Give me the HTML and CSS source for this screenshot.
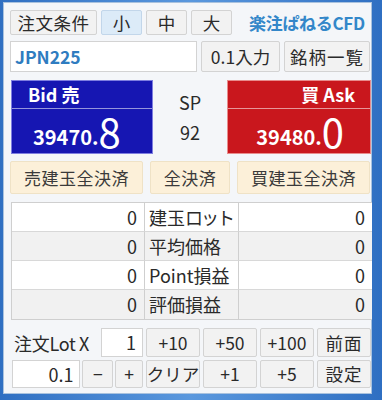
FILE: index.html
```html
<!DOCTYPE html>
<html lang="ja">
<head>
<meta charset="utf-8">
<link rel="stylesheet" href="styles.css">
</head>
<body>
<div class="win">
  <div class="row r1">
    <button class="btn cond">注文条件</button>
    <button class="btn sz sel">小</button>
    <button class="btn sz">中</button>
    <button class="btn sz">大</button>
    <div class="logo">楽注ぱねるCFD</div>
  </div>
  <div class="row r2">
    <div class="sym">JPN225</div>
    <button class="btn in">0.1入力</button>
    <button class="btn list">銘柄一覧</button>
  </div>
  <div class="quote">
    <div class="px bid">
      <div class="px-head">Bid 売</div>
      <div class="px-num"><span class="px-int">39470.</span><span class="px-dec">8</span></div>
    </div>
    <div class="sp"><div>SP</div><div>92</div></div>
    <div class="px ask">
      <div class="px-head">買 Ask</div>
      <div class="px-num"><span class="px-int">39480.</span><span class="px-dec">0</span></div>
    </div>
  </div>
  <div class="close">
    <button class="cbtn">売建玉全決済</button>
    <button class="cbtn">全決済</button>
    <button class="cbtn">買建玉全決済</button>
  </div>
  <div class="tbl">
    <div class="cell v">0</div><div class="cell l">建玉<span class="kana">ロット</span></div><div class="cell v">0</div>
    <div class="cell v alt">0</div><div class="cell l alt">平均価格</div><div class="cell v alt">0</div>
    <div class="cell v">0</div><div class="cell l">Point損益</div><div class="cell v">0</div>
    <div class="cell v alt">0</div><div class="cell l alt">評価損益</div><div class="cell v alt">0</div>
  </div>
  <div class="ord o1">
    <div class="left">
      <span class="lbl">注文Lot X</span>
      <div class="inp lot">1</div>
    </div>
    <button class="btn ob">+10</button>
    <button class="btn ob">+50</button>
    <button class="btn ob">+100</button>
    <button class="btn ob last">前面</button>
  </div>
  <div class="ord o2">
    <div class="left">
      <div class="inp step">0.1</div>
      <button class="btn pm minus">−</button>
      <button class="btn pm plus">+</button>
    </div>
    <button class="btn ob">クリア</button>
    <button class="btn ob">+1</button>
    <button class="btn ob">+5</button>
    <button class="btn ob last">設定</button>
  </div>
</div>
</body>
</html>
```

FILE: styles.css
```css
* { box-sizing: border-box; }
html, body { margin: 0; padding: 0; }
body {
  width: 382px;
  height: 400px;
  background: linear-gradient(90deg, #2f6fc2 0, #5a98de 50%, #2f6fc2 100%);
  font-family: "Noto Sans CJK JP", "Noto Sans", sans-serif;
  color: #2a2a2a;
  overflow: hidden;
}
.win {
  margin: 2px 10px 0 3px;
  height: 392px;
  background: #f4f6f9;
  border: 1px solid #a9c2de;
  padding: 7px 0 0 6px;
}
button {
  font-family: inherit;
  margin: 0;
  padding: 0;
  cursor: default;
}
.btn {
  background: #f2f2f2;
  border: 1px solid #d3d3d3;
  border-radius: 2px;
  color: #2a2a2a;
  font-size: 17.5px;
  line-height: 1;
  display: flex;
  align-items: center;
  justify-content: center;
  white-space: nowrap;
}
.row { display: flex; }
.r1 { height: 25px; gap: 4px; }
.cond { width: 87px; letter-spacing: 0.5px; }
.sz { width: 41px; }
.sel { background: #dcebf8; border-color: #c2d6ea; }
.logo {
  margin-left: 13px;
  color: #3387c9;
  font-weight: bold;
  font-size: 17px;
  line-height: 25px;
  letter-spacing: -0.3px;
}
.r2 { height: 31px; gap: 4px; margin-top: 6px; }
.sym {
  width: 187px;
  background: #fff;
  border: 1px solid #d3d3d3;
  color: #2f7cc0;
  font-weight: bold;
  font-size: 17.5px;
  line-height: 29px;
  padding-left: 4px;
}
.in { width: 79px; }
.list { width: 86px; letter-spacing: 1px; }

.quote {
  display: grid;
  grid-template-columns: 142px 1fr 144px;
  height: 74px;
  margin-top: 8px;
  padding-left: 1px;
}
.px {
  color: #fff;
  border: 1px solid #7e7ee0;
  display: flex;
  flex-direction: column;
}
.bid { background: #1616b2; }
.ask { background: #c9171d; border-color: #e88c8c; }
.px-head {
  height: 28px;
  font-weight: bold;
  font-size: 18px;
  line-height: 26px;
  padding: 0 16px;
  border-bottom: 1px solid rgba(255,255,255,0.55);
}
.ask .px-head { text-align: right; padding: 0 15px; }
.px-num {
  flex: 1;
  display: flex;
  align-items: flex-end;
  padding: 0 0 0 21px;
  line-height: 1;
}
.ask .px-num { justify-content: flex-end; padding: 0 26px 0 0; }
.px-int { font-size: 20px; font-weight: bold; padding-bottom: 6px; }
.px-dec { font-size: 40px; font-weight: normal; padding-bottom: 2px; }
.sp {
  display: flex;
  flex-direction: column;
  align-items: center;
  font-size: 18px;
  line-height: 30px;
  padding-top: 7px;
}

.close {
  display: grid;
  grid-template-columns: 133px 80px 133px;
  justify-content: space-between;
  height: 33px;
  margin-top: 7px;
  padding-right: 1px;
}
.cbtn {
  background: #fcf0d9;
  border: 1px solid #efe2c6;
  border-radius: 2px;
  color: #3a3a3a;
  font-size: 17px;
  letter-spacing: 0.5px;
  white-space: nowrap;
}

.tbl {
  display: grid;
  grid-template-columns: 132px 95px 133px;
  grid-auto-rows: 29px;
  margin-top: 8px;
  margin-left: 1px;
  width: 361px;
  border: 1px solid #cfcfcf;
  background: #fff;
}
.cell {
  border-bottom: 1px solid #d8d8d8;
  font-size: 18px;
  line-height: 28px;
  background: #fff;
}
.cell.alt { background: #f1f1f1; }
.tbl .cell:nth-last-child(-n+3) { border-bottom: none; }
.v { text-align: right; padding-right: 7px; }
.l {
  border-left: 1px solid #cfcfcf;
  border-right: 1px solid #cfcfcf;
  padding-left: 4px;
  white-space: nowrap;
  overflow: hidden;
}
.kana { letter-spacing: -2px; }

.ord {
  display: flex;
  gap: 3px;
}
.o1 { height: 29px; margin-top: 8px; }
.o2 { height: 28px; margin-top: 3px; }
.left {
  width: 133px;
  display: flex;
  align-items: center;
  gap: 2px;
}
.lbl {
  font-size: 18px;
  width: 88px;
  padding-left: 4px;
  white-space: nowrap;
  letter-spacing: -0.3px;
}
.inp {
  background: #fff;
  border: 1px solid #d3d3d3;
  height: 100%;
  font-size: 18px;
  text-align: right;
  padding-right: 6px;
  line-height: 26px;
}
.lot { width: 43px; margin-left: 4px; }
.step { width: 69px; margin-left: 2px; }
.pm { width: 31px; height: 100%; }
.plus { width: 28px; }
.ob { width: 54px; }
.ob.last { width: 54px; letter-spacing: 1px; }
```
